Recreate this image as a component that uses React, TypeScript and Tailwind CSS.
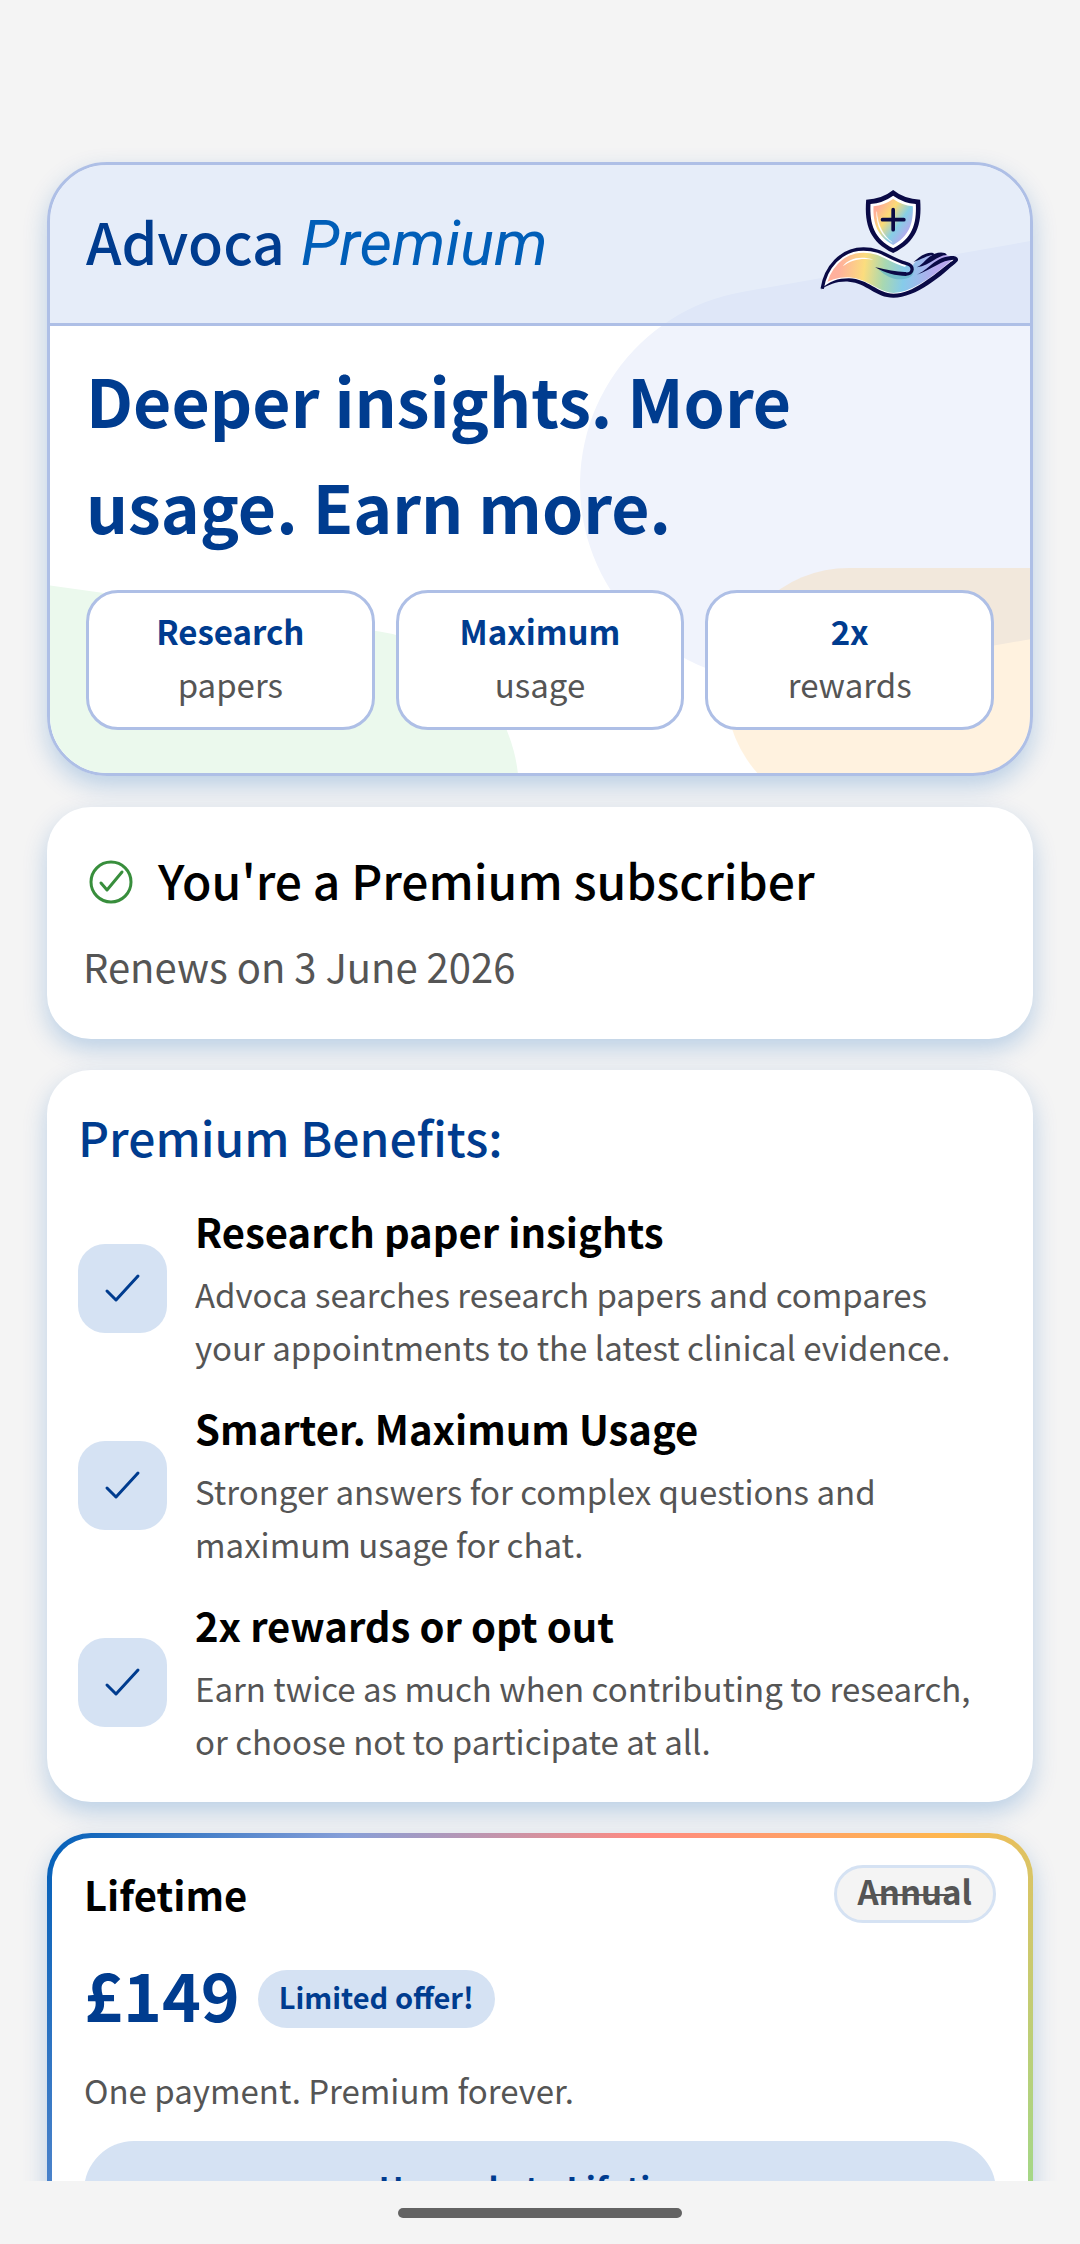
import React from 'react';

const HIGHLIGHTS = [
  { title: 'Research', label: 'papers' },
  { title: 'Maximum', label: 'usage' },
  { title: '2x', label: 'rewards' },
];

const BENEFITS = [
  {
    title: 'Research paper insights',
    text: 'Advoca searches research papers and compares your appointments to the latest clinical evidence.',
  },
  {
    title: 'Smarter. Maximum Usage',
    text: 'Stronger answers for complex questions and maximum usage for chat.',
  },
  {
    title: '2x rewards or opt out',
    text: 'Earn twice as much when contributing to research, or choose not to participate at all.',
  },
];

function HandShieldLogo() {
  const hand =
    'M66 355 C76 292 122 236 190 236 C246 236 268 266 318 279 C332 282 338 290 340 281 C354 266 372 250 396 252 C410 250 424 248 438 254 C452 260 464 260 470 267 C420 312 340 376 280 376 C230 376 204 332 146 329 C112 328 86 338 66 355 Z';

  return (
    <svg className="h-[110px] w-[139px] shrink-0" viewBox="60 56 416 330" fill="none" role="img" aria-label="Advoca">
      <defs>
        <linearGradient id="hand-fill" x1="85" y1="300" x2="460" y2="345" gradientUnits="userSpaceOnUse">
          <stop offset="0.08" stopColor="#ffb09c" />
          <stop offset="0.28" stopColor="#fbdd7e" />
          <stop offset="0.44" stopColor="#a9d8b0" />
          <stop offset="0.6" stopColor="#86cbea" />
          <stop offset="0.85" stopColor="#b7a8ee" />
        </linearGradient>
        <linearGradient id="shield-fill" x1="226" y1="120" x2="324" y2="188" gradientUnits="userSpaceOnUse">
          <stop offset="0" stopColor="#ffad98" />
          <stop offset="0.34" stopColor="#fbdb76" />
          <stop offset="0.68" stopColor="#86cfe6" />
          <stop offset="1" stopColor="#b7a8ee" />
        </linearGradient>
        <clipPath id="hand-clip">
          <path d={hand} />
        </clipPath>
      </defs>

      {/* shield */}
      <path d="M279 59 Q246 86 198 88 C192 166 210 214 279 248 C348 214 366 166 360 88 Q312 86 279 59 Z" fill="#0a0a46" />
      <path d="M279 76 Q248 98 211 101 C208 162 223 206 279 234 C335 206 350 162 347 101 Q310 98 279 76 Z" fill="#ffffff" />
      <path d="M279 86 Q252 105 220 108 C218 160 232 199 279 224 C326 199 340 160 338 108 Q306 105 279 86 Z" fill="url(#shield-fill)" />
      <path d="M229 124 C229 168 244 196 276 216 C248 194 234 166 229 124 Z" fill="#ffffff" stroke="#ffffff" />
      <path d="M279 118 V178 M247 148 H311" stroke="#0a0a46" strokeWidth="11" strokeLinecap="round" />

      {/* open hand */}
      <path d={hand} fill="url(#hand-fill)" />
      <g clipPath="url(#hand-clip)">
        <path d="M66 355 C76 292 122 236 190 236 C246 236 268 266 318 279" stroke="#ffffff" strokeWidth="22" />
        <path d="M470 267 C420 312 340 376 280 376 C230 376 204 332 146 329 C112 328 86 338 66 355" stroke="#ffffff" strokeWidth="16" />
      </g>
      <path d="M128 288 C146 264 180 256 220 268 C184 262 154 268 128 288 Z" fill="#ffffff" />
      <path d="M236 298 C262 322 290 334 326 322 C344 314 342 298 336 290 C336 308 320 314 300 312 Z" fill="#64b3c4" opacity="0.7" />
      <path
        d="M66 355 C76 292 122 236 190 236 C246 236 268 266 318 279 C344 285 340 313 316 311"
        stroke="#0a0a46"
        strokeWidth="10"
        strokeLinejoin="round"
      />
      <path d="M225 291 C262 298 292 306 318 305 L318 317 C288 317 254 308 225 291 Z" fill="#0a0a46" />
      <path d="M62 358 C86 332 114 324 146 324 C206 326 232 370 280 370 C338 370 398 316 452 274 L474 268 C428 316 346 382 280 382 C226 382 200 338 146 334 C112 332 86 342 62 358 Z" fill="#0a0a46" />
      <path d="M340 275 C356 262 372 247 392 247 C400 247 404 250 402 253 C382 254 362 268 340 275 Z" fill="#0a0a46" />
      <path d="M350 291 C372 280 380 260 404 250 C418 245 436 245 440 254 C408 256 394 284 350 291 Z" fill="#0a0a46" />
      <path d="M350 313 C384 300 404 262 448 258 C466 255 478 262 472 273 C462 284 452 290 440 296 L450 280 L460 268 C424 268 398 296 350 313 Z" fill="#0a0a46" />
    </svg>
  );
}

function HeroCard() {
  return (
    <section className="relative overflow-hidden rounded-[60px] border-3 border-[#aebfe6] bg-white">
      <svg className="absolute inset-0 h-full w-full" viewBox="0 0 980 608" preserveAspectRatio="xMidYMid slice" fill="none" strokeLinecap="round" aria-hidden="true">
        <path d="M726 320 l600 -106" stroke="#f0f3fc" strokeWidth="392" />
        <path d="M307 627 l-500 -70" stroke="#ebf9ed" strokeWidth="324" />
        <path d="M799 526 h500" stroke="#ffb74d" strokeOpacity="0.18" strokeWidth="246" />
      </svg>

      <header className="relative flex h-[161px] items-center justify-between border-b-3 border-[#aebfe6] bg-[#cddbf3]/50 pr-[71px] pl-9">
        <h1 className="flex items-baseline gap-4 pb-1 text-[57px] leading-[80px] font-medium text-[#003c8f]">
          Advoca
          <em className="font-[Roboto,sans-serif] text-[63px] font-normal text-[#005eb8]">Premium</em>
        </h1>
        <HandShieldLogo />
      </header>

      <div className="relative px-9 pt-5 pb-[43px]">
        <h2 className="text-[66px] leading-[106px] font-bold text-[#003c8f]">Deeper insights. More usage. Earn more.</h2>
        <ul className="mt-8 grid grid-cols-3 gap-[21px]">
          {HIGHLIGHTS.map((item) => (
            <li
              key={item.title}
              className="flex flex-col items-center rounded-[32px] border-3 border-[#aebfe6] bg-white pt-3 pb-4 text-[33px] leading-[53px]"
            >
              <strong className="font-bold text-[#003c8f]">{item.title}</strong>
              <span className="text-[#555555]">{item.label}</span>
            </li>
          ))}
        </ul>
      </div>
    </section>
  );
}

function StatusCard() {
  return (
    <section className="rounded-[44px] bg-white px-9 pt-[38px] pb-[43px] shadow-[0_10px_24px_rgba(0,94,184,0.24)]">
      <div className="flex items-center gap-[25px] pl-1.5">
        <svg className="mt-1.5 size-11 shrink-0" viewBox="0 0 44 44" fill="none" stroke="#388e3c" strokeWidth="3" strokeLinecap="round" strokeLinejoin="round" aria-hidden="true">
          <circle cx="22" cy="22" r="20" />
          <path d="M12 23 L18 30 L33 12" />
        </svg>
        <h2 className="text-[48px] leading-[68px] font-medium text-black">You're a Premium subscriber</h2>
      </div>
      <p className="mt-[23px] text-[40px] leading-[60px] text-[#555555]">Renews on 3 June 2026</p>
    </section>
  );
}

function BenefitsCard() {
  return (
    <section className="rounded-[44px] bg-white px-[31px] pt-8 pb-[34px] shadow-[0_10px_24px_rgba(0,94,184,0.24)]">
      <h2 className="text-[48px] leading-[68px] font-medium text-[#003c8f]">Premium Benefits:</h2>
      <ul className="mt-8 flex flex-col gap-[25px]">
        {BENEFITS.map((benefit) => (
          <li key={benefit.title} className="flex items-center gap-7">
            <div className="size-[89px] shrink-0 rounded-[27px] bg-[#d5e2f3]">
              <svg viewBox="0 0 89 89" fill="none" stroke="#003c8f" strokeWidth="3" strokeLinecap="round" strokeLinejoin="round" aria-hidden="true">
                <path d="M29 47 L38 56 L60 32" />
              </svg>
            </div>
            <div className="flex-1">
              <h3 className="text-[40px] leading-[58px] font-bold text-black">{benefit.title}</h3>
              <p className="mt-2 text-[33px] leading-[53px] text-[#555555]">{benefit.text}</p>
            </div>
          </li>
        ))}
      </ul>
    </section>
  );
}

function LifetimeCard() {
  return (
    <section className="rounded-[44px] bg-[linear-gradient(115deg,#005eb8,#869fd8,#ff8a80,#ffb74d,#91de94)] p-[5px] shadow-[0_10px_24px_rgba(0,94,184,0.24)]">
      <div className="rounded-[39px] bg-white px-8 pt-[27px] pb-11">
        <div className="flex items-center justify-between">
          <h2 className="text-[40px] leading-[58px] font-bold text-black">Lifetime</h2>
          <span className="relative rounded-full border-3 border-[#d5e2f3] bg-[#f4f4f4] px-[21px] pb-1.5 text-[33px] leading-[46px] font-bold text-[#555555]">
            <s className="no-underline">Annual</s>
            <span className="absolute inset-x-9 top-1/2 h-0.5 bg-[#555555]" />
          </span>
        </div>
        <div className="mt-[22px] flex items-center gap-[18px]">
          <p className="text-[66px] leading-[96px] font-bold text-[#003c8f]">£149</p>
          <span className="mt-3 rounded-full bg-[#d5e2f3] px-[21px] pb-1.5 text-[29px] leading-[52px] font-bold text-[#003c8f]">
            Limited offer!
          </span>
        </div>
        <p className="mt-[23px] text-[33px] leading-[53px] text-[#555555]">One payment. Premium forever.</p>
        <button
          type="button"
          className="mt-6 h-[100px] w-full rounded-full bg-[#d5e2f3] pb-1 text-[33px] font-bold text-[#003c8f]"
        >
          Upgrade to Lifetime
        </button>
      </div>
    </section>
  );
}

export default function App() {
  return (
    <div className="flex h-screen flex-col bg-[#f4f4f4] font-['Noto_Sans_CJK_SC',sans-serif]">
      <main className="flex min-h-0 flex-1 flex-col gap-[31px] overflow-y-auto px-[47px] pt-[162px] pb-8 [scrollbar-width:none] *:shrink-0">
        <div className="rounded-[60px] shadow-[0_10px_24px_rgba(0,94,184,0.24)]">
          <HeroCard />
        </div>
        <StatusCard />
        <BenefitsCard />
        <LifetimeCard />
      </main>
      <footer className="flex h-[63px] shrink-0 justify-center pt-[27px]">
        <div className="h-2.5 w-[284px] rounded-full bg-[#636363]" />
      </footer>
    </div>
  );
}
